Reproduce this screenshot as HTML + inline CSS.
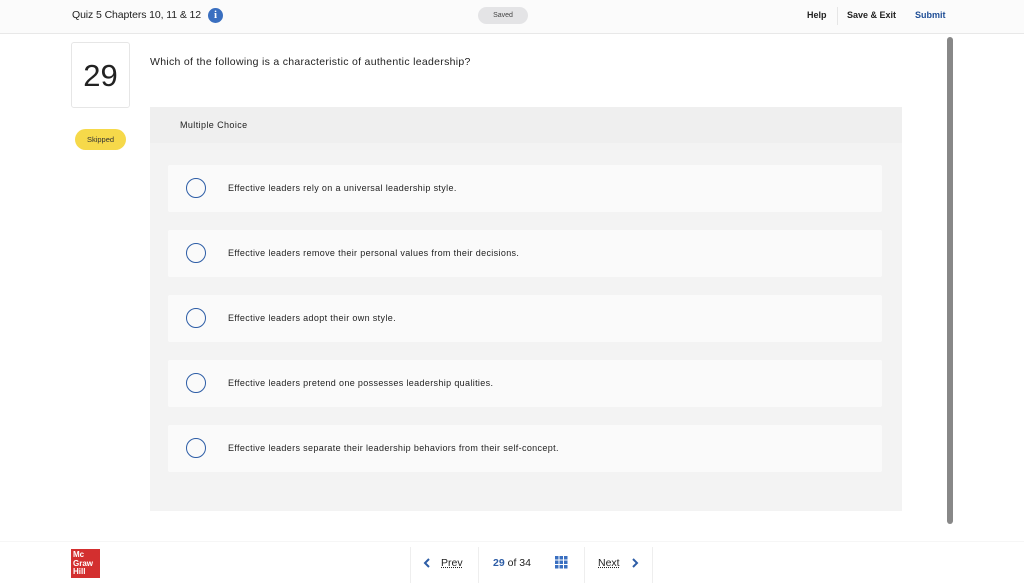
<!DOCTYPE html>
<html><head><style>
*{margin:0;padding:0;box-sizing:border-box}
body{width:1024px;height:583px;background:#fff;font-family:"Liberation Sans",sans-serif;color:#222;position:relative;overflow:hidden}
.a{position:absolute}
.hdr{left:0;top:0;width:1024px;height:34px;background:#fbfbfb;border-bottom:1px solid #e8e8e8}
.opt{left:168px;width:714px;height:47px;background:#fafafa;border-radius:2px}
.rad{left:18px;top:13px;width:20px;height:20px;border:1.3px solid #2d5da6;border-radius:50%;position:absolute}
.ot{position:absolute;left:60px;top:18px;font-size:9px;letter-spacing:0.35px;color:#222;white-space:nowrap}
.sep{width:1px;background:#eee;top:547px;height:36px}
</style></head><body>
<div class="a hdr"></div>
<div class="a" style="left:72px;top:9px;font-size:10.5px;letter-spacing:-0.1px;white-space:nowrap">Quiz 5 Chapters 10, 11 &amp; 12</div>
<div class="a" style="left:208px;top:8px;width:15px;height:15px;border-radius:50%;background:#3a6fc0;color:#fff;font-size:11px;font-weight:bold;text-align:center;line-height:15px;font-family:'Liberation Serif',serif">i</div>
<div class="a" style="left:478px;top:7px;width:50px;height:17px;border-radius:9px;background:#e4e4e6;font-size:7px;color:#444;text-align:center;line-height:17px">Saved</div>
<div class="a" style="left:807px;top:10px;font-size:9px;font-weight:bold">Help</div>
<div class="a" style="left:837px;top:7px;width:1px;height:18px;background:#e6e6e6"></div>
<div class="a" style="left:847px;top:10px;font-size:9px;font-weight:bold">Save &amp; Exit</div>
<div class="a" style="left:915px;top:10px;font-size:9px;font-weight:bold;color:#1f4e96">Submit</div>
<div class="a" style="left:947px;top:37px;width:6px;height:487px;border-radius:3px;background:#888"></div>
<div class="a" style="left:71px;top:42px;width:59px;height:66px;border:1px solid #e6e6e6;border-radius:3px;font-size:31px;text-align:center;line-height:66px">29</div>
<div class="a" style="left:75px;top:129px;width:51px;height:21px;border-radius:11px;background:#f6d94a;font-size:7.5px;text-align:center;line-height:21px;color:#333">Skipped</div>
<div class="a" style="left:150px;top:56px;font-size:10.5px;letter-spacing:0.3px;white-space:nowrap">Which of the following is a characteristic of authentic leadership?</div>
<div class="a" style="left:150px;top:107px;width:752px;height:404px;background:#f3f3f3"></div>
<div class="a" style="left:150px;top:107px;width:752px;height:36px;background:#efefef"></div>
<div class="a" style="left:180px;top:120px;font-size:9px;letter-spacing:0.4px">Multiple Choice</div>
<div class="a opt" style="top:165px"><div class="rad"></div><div class="ot">Effective leaders rely on a universal leadership style.</div></div>
<div class="a opt" style="top:230px"><div class="rad"></div><div class="ot">Effective leaders remove their personal values from their decisions.</div></div>
<div class="a opt" style="top:295px"><div class="rad"></div><div class="ot">Effective leaders adopt their own style.</div></div>
<div class="a opt" style="top:360px"><div class="rad"></div><div class="ot">Effective leaders pretend one possesses leadership qualities.</div></div>
<div class="a opt" style="top:425px"><div class="rad"></div><div class="ot">Effective leaders separate their leadership behaviors from their self-concept.</div></div>
<div class="a" style="left:0;top:541px;width:1024px;height:1px;background:#f6f6f6"></div>
<div class="a" style="left:71px;top:549px;width:29px;height:29px;background:#d32f2f;color:#fff;font-size:8px;font-weight:bold;line-height:8.5px;padding:2px 0 0 2px">Mc<br>Graw<br>Hill</div>
<div class="a sep" style="left:410px"></div>
<div class="a sep" style="left:478px"></div>
<div class="a sep" style="left:584px"></div>
<div class="a sep" style="left:652px"></div>
<svg class="a" style="left:423px;top:557px" width="8" height="12"><path d="M6 2 L2 6 L6 10" stroke="#2d5da6" stroke-width="2" fill="none"/></svg>
<div class="a" style="left:441px;top:557px;font-size:10.5px;text-decoration:underline dotted">Prev</div>
<div class="a" style="left:493px;top:557px;font-size:10.5px"><b style="color:#2d5da6">29</b> of 34</div>
<svg class="a" style="left:555px;top:556px" width="13" height="13"><g fill="#3a6fc0"><rect x="0" y="0" width="3.5" height="3.5"/><rect x="4.5" y="0" width="3.5" height="3.5"/><rect x="9" y="0" width="3.5" height="3.5"/><rect x="0" y="4.5" width="3.5" height="3.5"/><rect x="4.5" y="4.5" width="3.5" height="3.5"/><rect x="9" y="4.5" width="3.5" height="3.5"/><rect x="0" y="9" width="3.5" height="3.5"/><rect x="4.5" y="9" width="3.5" height="3.5"/><rect x="9" y="9" width="3.5" height="3.5"/></g></svg>
<div class="a" style="left:598px;top:557px;font-size:10.5px;text-decoration:underline dotted">Next</div>
<svg class="a" style="left:631px;top:557px" width="8" height="12"><path d="M2 2 L6 6 L2 10" stroke="#2d5da6" stroke-width="2" fill="none"/></svg>
</body></html>
